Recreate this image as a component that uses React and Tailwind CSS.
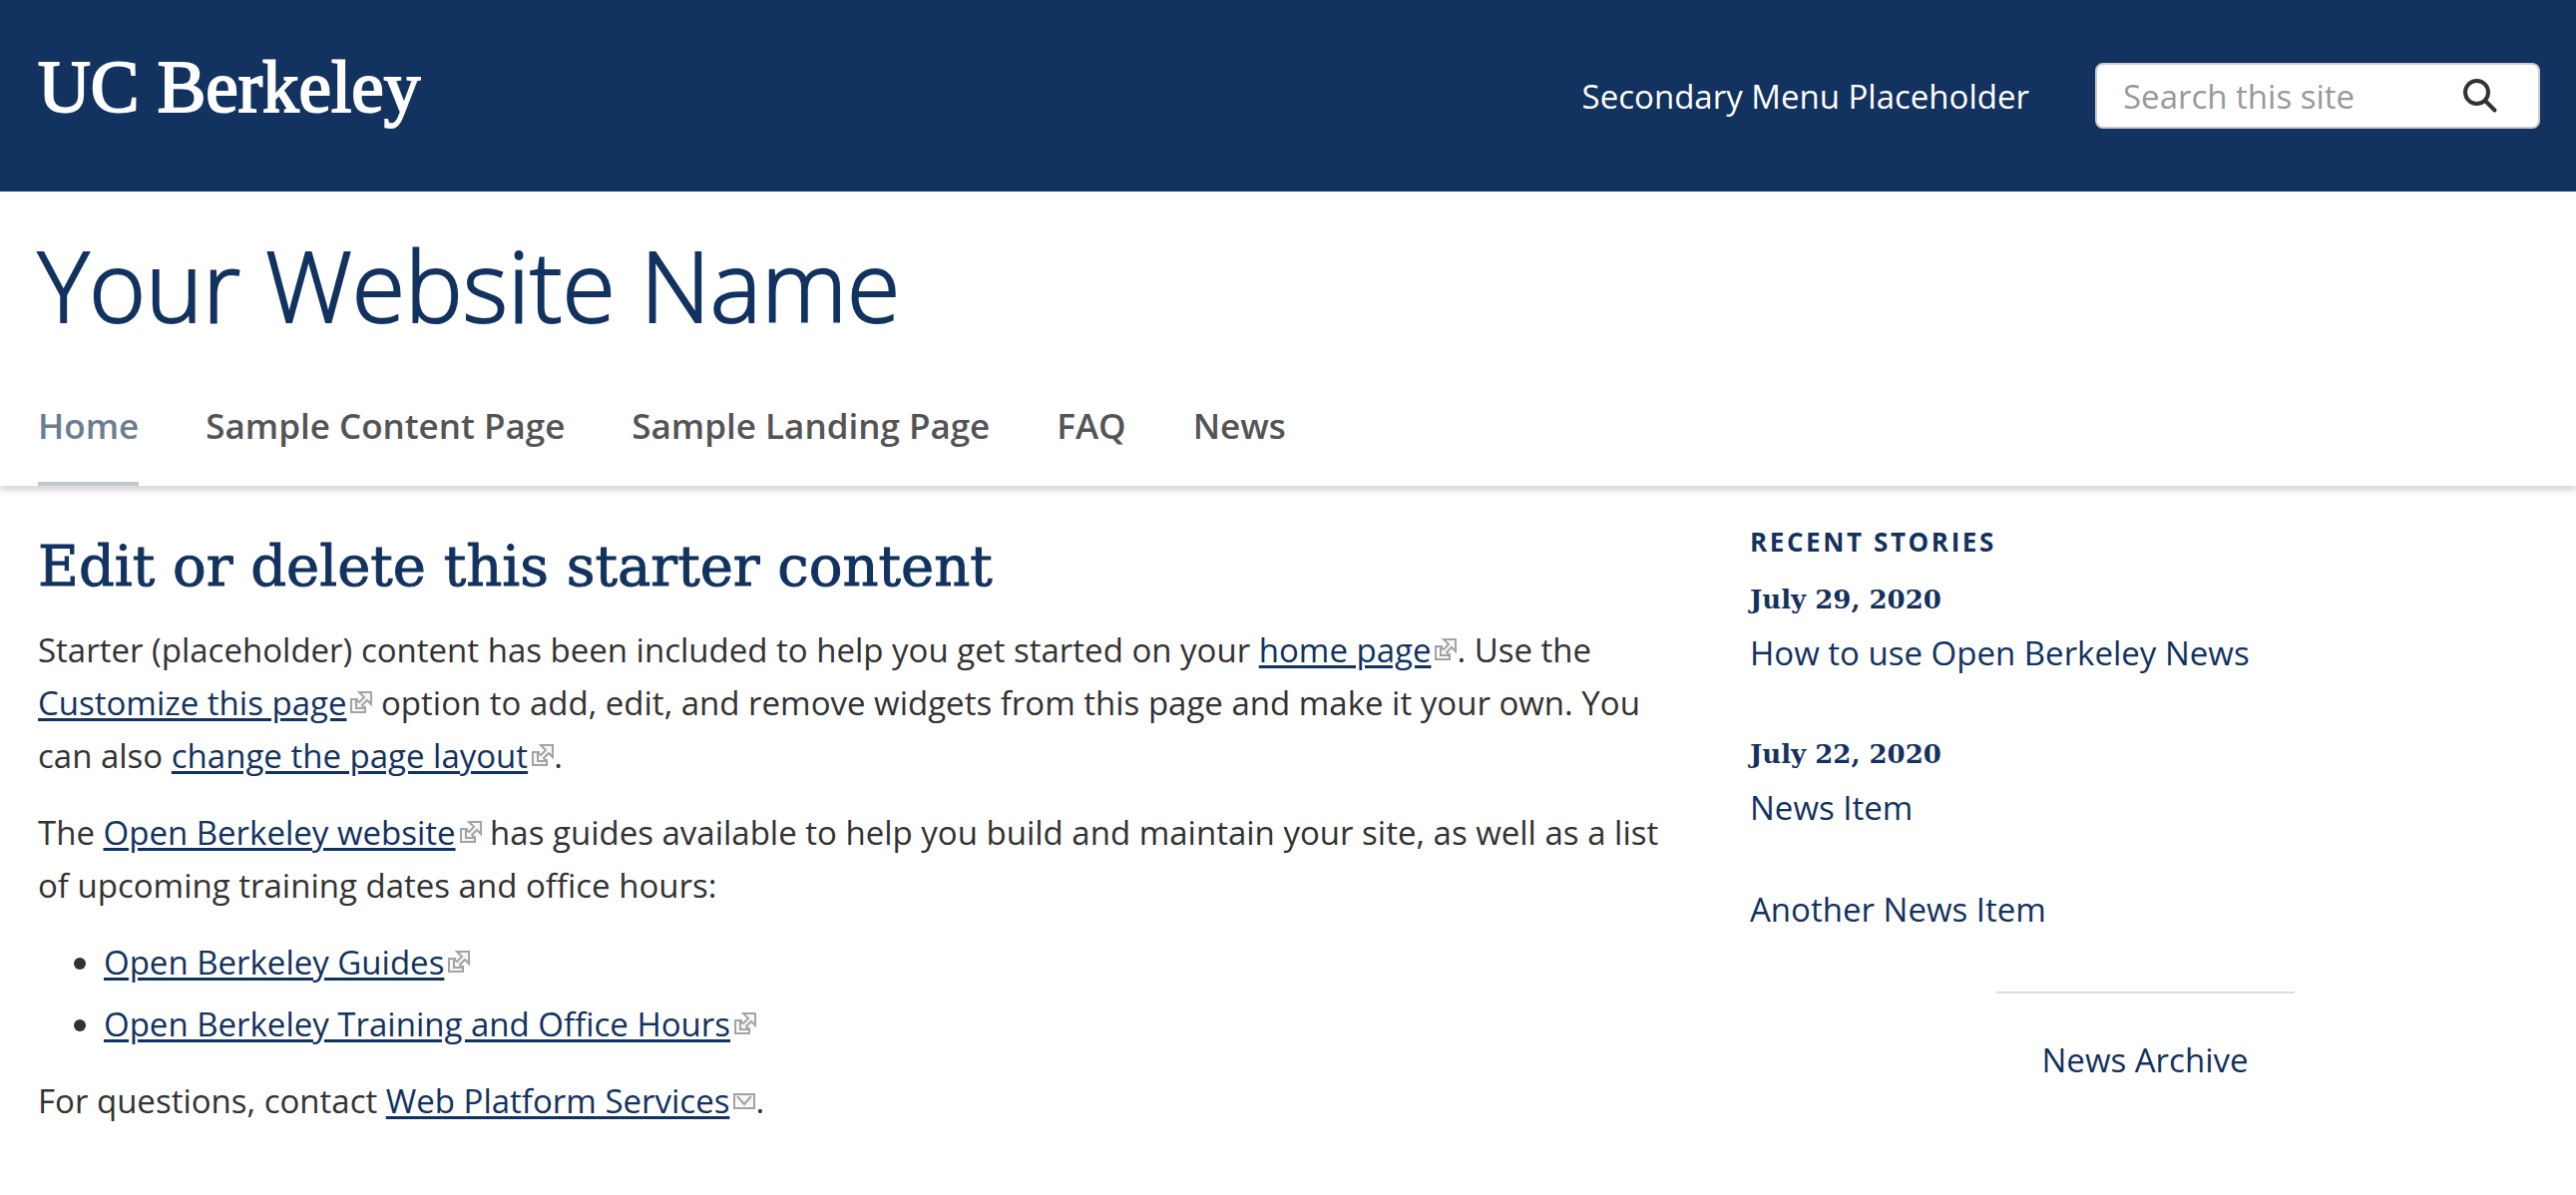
const navItems = ["Home", "Sample Content Page", "Sample Landing Page", "FAQ", "News"];

const stories = [
  { date: "July 29, 2020", items: ["How to use Open Berkeley News"] },
  { date: "July 22, 2020", items: ["News Item", "Another News Item"] },
];

function ExternalIcon() {
  return (
    <svg
      viewBox="0 0 22 22"
      className="ml-1 inline-block h-[22px] w-[22px] align-[2px]"
      fill="#f8f8f8"
      stroke="#a3a3a3"
      strokeWidth="2"
      aria-hidden="true"
    >
      <path d="M8 8H1v13h14v-6" />
      <path d="M9 1h12v12l-4-4-5 5 2 3H6V9l3 2 5-5z" />
    </svg>
  );
}

function MailIcon() {
  return (
    <svg
      viewBox="0 0 22 16"
      className="ml-1 inline-block h-4 w-[22px] align-[4px]"
      fill="#f8f8f8"
      stroke="#a3a3a3"
      strokeWidth="2"
      aria-hidden="true"
    >
      <rect x="1" y="1" width="20" height="14" />
      <path d="M4 3l7 8 7-8" fill="none" />
    </svg>
  );
}

function TextLink({ children, mail }) {
  return (
    <>
      <a
        href="#"
        className="text-[#12325f] underline decoration-[3px] underline-offset-[3px]"
      >
        {children}
      </a>
      {mail ? <MailIcon /> : <ExternalIcon />}
    </>
  );
}

function SiteHeader() {
  return (
    <header className="flex h-48 items-center justify-between bg-[#12325f] pr-9 pl-[38px] text-white">
      <a
        href="#"
        className="pb-4 font-['Liberation_Serif',serif] text-[73px] leading-[80px] [-webkit-text-stroke:2px_white]"
      >
        UC Berkeley
      </a>
      <div className="flex items-center gap-[66px]">
        <a href="#">Secondary Menu Placeholder</a>
        <form
          className="flex h-[66px] w-[446px] items-center rounded-lg border-2 border-[#ccc] bg-white pr-10 pl-[26px]"
          onSubmit={(e) => e.preventDefault()}
        >
          <input
            type="search"
            aria-label="Search this site"
            placeholder="Search this site"
            className="min-w-0 flex-1 text-[#323232] outline-none placeholder:text-[#999]"
          />
          <button type="submit" aria-label="Search">
            <svg
              viewBox="0 0 36 36"
              className="h-9 w-9"
              fill="none"
              stroke="#323232"
              strokeWidth="4"
              strokeLinecap="round"
              aria-hidden="true"
            >
              <circle cx="14.5" cy="14.5" r="11.5" />
              <path d="M23 23l9.5 9.5" />
            </svg>
          </button>
        </form>
      </div>
    </header>
  );
}

function MainNav() {
  return (
    <nav className="flex gap-[67px] px-[38px] pt-[30px] text-[35px] font-semibold text-[#545454] shadow-[0_5px_5px_rgba(0,0,0,0.15)]">
      {navItems.map((item, i) => (
        <a
          key={item}
          href="#"
          className={`border-b-4 pb-[30px] ${i === 0 ? "border-[#c1c9d0] text-[#6a7d91]" : "border-transparent"}`}
        >
          {item}
        </a>
      ))}
    </nav>
  );
}

function RecentStories() {
  return (
    <aside className="text-[#12325f]">
      <h2 className="text-[26px] leading-10 font-bold tracking-widest uppercase">Recent Stories</h2>
      <div className="mt-3 flex flex-col gap-[49px]">
        {stories.map((group) => (
          <section key={group.date}>
            <h3 className="font-['DejaVu_Serif',serif] text-[26px] leading-[53px] font-bold">
              {group.date}
            </h3>
            <ul className="flex flex-col gap-[49px]">
              {group.items.map((item) => (
                <li key={item}>
                  <a href="#">{item}</a>
                </li>
              ))}
            </ul>
          </section>
        ))}
      </div>
      <div className="mt-14 flex justify-center">
        <a href="#" className="border-t-2 border-[#ddd] px-[46px] pt-10">
          News Archive
        </a>
      </div>
    </aside>
  );
}

export default function App() {
  return (
    <div className="min-h-screen bg-white font-['Open_Sans',sans-serif] text-[33px] leading-[53px] text-[#323232]">
      <SiteHeader />
      <h1 className="px-[38px] pt-7 pb-5 text-[97px] leading-[130px] font-light text-[#12325f] [-webkit-text-stroke:2px_#12325f]">
        Your Website Name
      </h1>
      <MainNav />
      <div className="grid grid-cols-[205fr_99fr] gap-[76px] pt-9 pr-9 pb-16 pl-[38px]">
        <main>
          <h2 className="mb-3 font-['DejaVu_Serif',serif] text-[56px] leading-[90px] text-[#12325f] [-webkit-text-stroke:1px_#12325f]">
            Edit or delete this starter content
          </h2>
          <div className="flex flex-col gap-6">
            <p>
              Starter (placeholder) content has been included to help you get started on your{" "}
              <TextLink>home page</TextLink>. Use the <TextLink>Customize this page</TextLink> option to
              add, edit, and remove widgets from this page and make it your own. You can also{" "}
              <TextLink>change the page layout</TextLink>.
            </p>
            <p>
              The <TextLink>Open Berkeley website</TextLink> has guides available to help you build and
              maintain your site, as well as a list of upcoming training dates and office hours:
            </p>
            <ul className="flex list-disc flex-col gap-[9px] pl-[66px]">
              <li>
                <TextLink>Open Berkeley Guides</TextLink>
              </li>
              <li>
                <TextLink>Open Berkeley Training and Office Hours</TextLink>
              </li>
            </ul>
            <p>
              For questions, contact <TextLink mail>Web Platform Services</TextLink>.
            </p>
          </div>
        </main>
        <RecentStories />
      </div>
    </div>
  );
}
